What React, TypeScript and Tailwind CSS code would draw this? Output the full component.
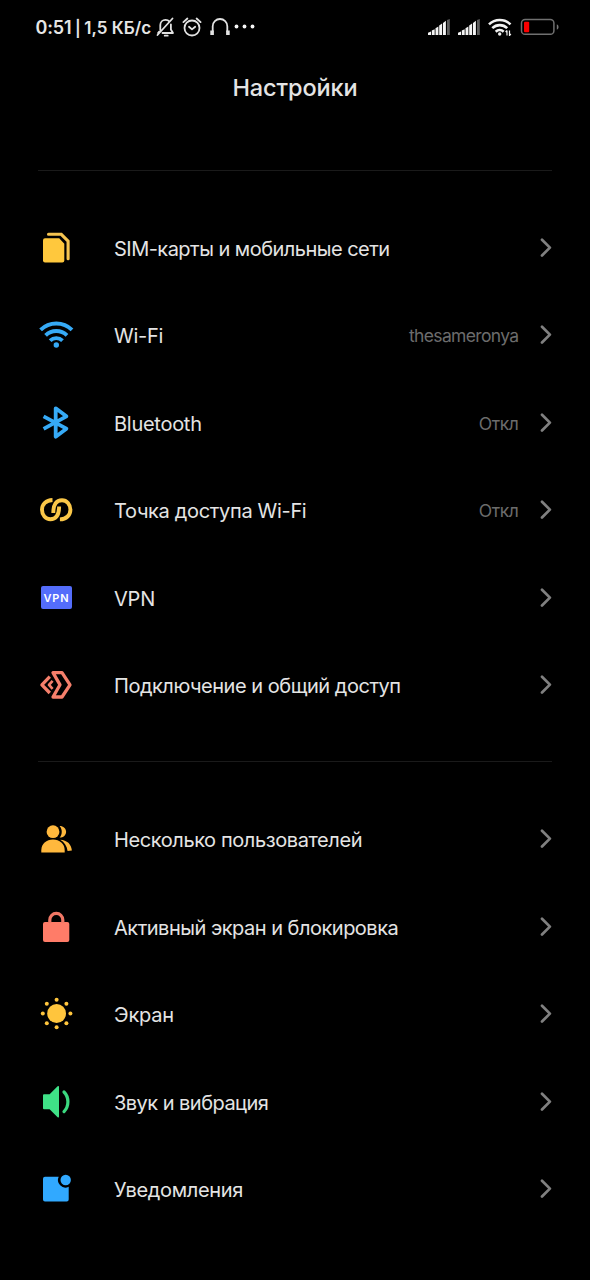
import type { ReactNode } from "react";

const SimIcon = () => (
  <svg viewBox="0 0 36 36" className="size-9" fill="none">
    <path d="M7 8.3h14.2l5.1 5.4v16.8a2 2 0 0 1-2 2H7a2 2 0 0 1-2-2V10.300a2 2 0 0 1 2-2z" fill="#ffc83d" />
    <path d="M10.500 4.300h12.800l6.800 6.900v17.600" stroke="#f5c450" strokeWidth="3.100" strokeLinecap="round" />
  </svg>
);

const WifiIcon = () => (
  <svg viewBox="0 0 36 36" className="size-9" fill="none" stroke="#36aaf6" strokeWidth="3.900">
    <path d="M2.600 12.900a22.400 22.400 0 0 1 31.400 0" />
    <path d="M7.600 18.300a15.400 15.400 0 0 1 21.400 0" />
    <path d="M12.100 23.600a9 9 0 0 1 12.400 0" />
    <circle cx="18.300" cy="28" r="2.700" fill="#36aaf6" stroke="none" />
  </svg>
);

const BluetoothIcon = () => (
  <svg viewBox="0 0 36 36" className="size-9" fill="none" stroke="#36aaf6" strokeWidth="3.800" strokeLinejoin="round">
    <path d="M5.600 11.300 28.400 23.700l-10.700 8V3.300l10.700 8L5.600 23.900" />
  </svg>
);

const HotspotIcon = () => (
  <svg viewBox="0 0 36 36" className="size-9" fill="none" stroke="#fac748" strokeWidth="3.900">
    <path d="M14.500 8C8 8.200 4 12.300 4 17.700c0 5.400 3.600 9.500 8.400 9.500 5.700 0 8.700-4.400 8.700-12.700" />
    <path d="M21.900 27.400c6.500-.2 10.500-4.300 10.500-9.700 0-5.400-3.600-9.500-8.400-9.500-5.700 0-8.700 4.400-8.700 12.700" />
  </svg>
);

const VpnIcon = () => (
  <span className="ml-[3px] flex h-[23px] w-[31px] items-center justify-center rounded-[2px] bg-[#546dfb] pt-px text-[11px] leading-none font-semibold tracking-[0.900px] text-white">
    VPN
  </span>
);

const ShareIcon = () => (
  <svg viewBox="0 0 36 36" className="size-9" fill="none" stroke="#f57f6b" strokeWidth="3.300" strokeLinejoin="round">
    <path d="M15 5.700h9L32 17.800l-8 12.200h-9l7-12.200z" />
    <path d="M11.800 9.600 3.900 17.800l7.900 8.200" />
    <path d="M14.600 13.900 11 17.800l3.600 4" strokeWidth="2.700" />
  </svg>
);

const UsersIcon = () => (
  <svg viewBox="0 0 36 36" className="size-9" fill="#ffb83d">
    <circle cx="15" cy="10.700" r="6.400" />
    <path d="M3.300 31.600v-2C3.300 22.600 8.500 18.600 15 18.600s11.700 4 11.700 11v2z" />
    <path d="M21.600 4.900c3.800 0 6.500 2.500 6.500 5.800s-2.700 5.900-6.500 5.900c2.900-3.300 2.900-8.400 0-11.700z" />
    <path d="M22.200 18.700c6.800.4 11.200 4.300 11.700 10.900l-4.300.3c-.6-4.900-3.200-8.800-7.400-11.200z" />
  </svg>
);

const LockIcon = () => (
  <svg viewBox="0 0 36 36" className="size-9" fill="none">
    <rect x="5" y="13" width="26.300" height="20" rx="2" fill="#ff7c68" />
    <path d="M11.800 14v-3.100a6.500 6.500 0 0 1 13 0V14" stroke="#f07765" strokeWidth="3.200" />
  </svg>
);

const SunIcon = () => (
  <svg viewBox="0 0 36 36" className="size-9" fill="#ffc53d">
    <circle cx="18.600" cy="17.500" r="9.400" />
    <circle cx="18.600" cy="3.700" r="2" />
    <circle cx="18.600" cy="31.300" r="2" />
    <circle cx="4.800" cy="17.500" r="2" />
    <circle cx="32.400" cy="17.500" r="2" />
    <circle cx="8.800" cy="7.700" r="2" />
    <circle cx="28.400" cy="7.700" r="2" />
    <circle cx="8.800" cy="27.300" r="2" />
    <circle cx="28.400" cy="27.300" r="2" />
  </svg>
);

const SoundIcon = () => (
  <svg viewBox="0 0 36 36" className="size-9" fill="none">
    <path d="M6 10.300h5.600l8-8q1.400-.8 1.400.8v29.400q0 1.600-1.400.8l-8-8H6a1 1 0 0 1-1-1v-13a1 1 0 0 1 1-1z" fill="#3fe187" />
    <path d="M26 8c5.200 5.200 5.200 14.300 0 19.600" stroke="#3bd87f" strokeWidth="3.200" strokeLinecap="round" />
  </svg>
);

const NotificationIcon = () => (
  <svg viewBox="0 0 36 36" className="size-9" fill="#31a9ff">
    <path d="M7 5.800h13.700a7.500 7.500 0 0 0 10 10V28.600a2 2 0 0 1-2 2H7a2 2 0 0 1-2-2V7.800a2 2 0 0 1 2-2z" />
    <circle cx="27.700" cy="9" r="5.200" />
  </svg>
);

interface Item {
  label: string;
  icon: ReactNode;
  tracking: string;
  value?: string;
  valueTracking?: string;
}

const network: Item[] = [
  { label: "SIM-карты и мобильные сети", icon: <SimIcon />, tracking: "tracking-[-0.530px]" },
  { label: "Wi-Fi", icon: <WifiIcon />, tracking: "tracking-[-0.250px]", value: "thesameronya", valueTracking: "tracking-[-0.650px]" },
  { label: "Bluetooth", icon: <BluetoothIcon />, tracking: "tracking-[-0.270px]", value: "Откл", valueTracking: "tracking-[-0.400px]" },
  { label: "Точка доступа Wi-Fi", icon: <HotspotIcon />, tracking: "tracking-[-0.330px]", value: "Откл", valueTracking: "tracking-[-0.400px]" },
  { label: "VPN", icon: <VpnIcon />, tracking: "tracking-[-0.200px]" },
  { label: "Подключение и общий доступ", icon: <ShareIcon />, tracking: "tracking-[-0.470px]" },
];

const device: Item[] = [
  { label: "Несколько пользователей", icon: <UsersIcon />, tracking: "tracking-[-0.410px]" },
  { label: "Активный экран и блокировка", icon: <LockIcon />, tracking: "tracking-[-0.500px]" },
  { label: "Экран", icon: <SunIcon />, tracking: "tracking-[-0.200px]" },
  { label: "Звук и вибрация", icon: <SoundIcon />, tracking: "tracking-[-0.530px]" },
  { label: "Уведомления", icon: <NotificationIcon />, tracking: "tracking-[-0.320px]" },
];

const Row = ({ label, icon, tracking, value, valueTracking }: Item) => (
  <li className="flex h-[87.5px] items-center">
    <span className="flex w-[76px] shrink-0 items-center">{icon}</span>
    <span className={`grow pt-[2px] text-[20px] leading-7 whitespace-nowrap text-[#e4e4e4] ${tracking}`}>{label}</span>
    {value && <span className={`mr-[21.500px] pt-[2px] text-[17.500px] leading-7 text-[#6c6c6c] ${valueTracking}`}>{value}</span>}
    <svg viewBox="0 0 12 20" className="h-5 w-3 shrink-0" fill="none" stroke="#808080" strokeWidth="2.700" strokeLinecap="round" strokeLinejoin="round">
      <path d="M2 1.700l7.900 7.900L2 17.500" />
    </svg>
  </li>
);

const Signal = () => (
  <svg viewBox="0 0 22 16" className="h-4 w-[22px]" fill="#f4f4f4">
    <path d="M0 16v-2.200l3-1.300V16z" />
    <path d="M3.800 16v-4.400l2.900-1.400V16z" />
    <path d="M7.500 16V9.300l2.900-1.700V16z" />
    <path d="M11.200 16V6.600l2.900-2V16z" />
    <path d="M15 16V4l2.900-2.200V16z" />
    <path d="M19 16V1l2.800-1v16z" fill="#5c5c5c" />
  </svg>
);

const StatusBar = () => (
  <header className="flex h-[54px] items-center pl-[35.500px]">
    <div className="flex w-[119.500px] shrink-0 items-baseline pt-px font-semibold whitespace-nowrap text-[#e6e6e6]">
      <span className="text-[18px] tracking-[-0.150px]">0:51</span>
      <span className="ml-[3.500px] text-[16px]">|</span>
      <span className="ml-[3.500px] text-[17px] tracking-[0.050px]">1,5 КБ/с</span>
    </div>
    <svg viewBox="0 0 100 24" className="h-6 w-[100px] shrink-0" fill="none" stroke="#e2e2e2" strokeWidth="1.800" strokeLinecap="round" strokeLinejoin="round">
      <path d="M5.300 15V10c0-3 2.300-5.200 5.200-5.200 1.700 0 3.100.7 4 1.800M15.900 9.500v5l2.100 3.500H7.500M3 18l1.200-1.400M9.700 20.700h3M2.500 20 17.500 3.500" />
      <circle cx="37" cy="13" r="7.500" />
      <path d="M34 11.800l3 2.600 3.200-2.600M28.400 7.100l4-3.600M45.600 7.100l-4-3.600" />
      <path d="M57.700 16V11.300a7.300 7.300 0 0 1 14.600 0V16" />
      <path d="M57.100 15.500v4.500M72.900 15.500v4.500" strokeWidth="3.600" strokeLinecap="butt" />
      <g fill="#f6f6f6" stroke="none">
        <circle cx="81.500" cy="11.500" r="1.900" />
        <circle cx="89.500" cy="11.500" r="1.900" />
        <circle cx="97.500" cy="11.500" r="1.900" />
      </g>
    </svg>
    <div className="ml-auto flex items-center pr-[30px]">
      <Signal />
      <span className="w-2" />
      <Signal />
      <svg viewBox="0 0 24 18" className="ml-2 h-[18px] w-6" fill="none" stroke="#f2f2f2" strokeWidth="2.600">
        <path d="M1 6.400a15.500 15.500 0 0 1 21.500 0M4.300 10.200a10.600 10.600 0 0 1 14.900 0M7.700 13.700a5.800 5.800 0 0 1 8 0" />
        <circle cx="11.700" cy="16" r="1.700" fill="#eee" stroke="none" />
        <path d="M19 12.500v5M17.600 14l1.400-1.500M21.500 12.500v5l1.400-1.500" strokeWidth="1.200" />
      </svg>
      <svg viewBox="0 0 40 18" className="ml-2 h-[18px] w-10" fill="none">
        <rect x="1.500" y="1.500" width="32.400" height="14.800" rx="3.600" stroke="#707070" strokeWidth="1.500" />
        <rect x="4" y="3.700" width="5.200" height="10.600" rx="1" fill="#fa0000" />
        <path d="M36.800 6.200q1.800.6 1.800 2.800t-1.800 2.800z" fill="#777" />
      </svg>
    </div>
  </header>
);

export default function App() {
  return (
    <main className="h-[1280px] w-[590px] overflow-hidden bg-black font-['Inter',sans-serif]">
      <StatusBar />
      <h1 className="flex h-[116px] justify-center pt-[15.500px] text-[23.500px] leading-9 font-medium tracking-[-0.100px] text-[#e4e4e4]">Настройки</h1>
      <div className="mx-[38px]">
        <ul className="border-t border-[#1a1a1a] pt-[33px] pb-[32px]">
          {network.map((item) => (
            <Row key={item.label} {...item} />
          ))}
        </ul>
        <ul className="border-t border-[#1a1a1a] pt-[33.500px]">
          {device.map((item) => (
            <Row key={item.label} {...item} />
          ))}
        </ul>
      </div>
    </main>
  );
}
